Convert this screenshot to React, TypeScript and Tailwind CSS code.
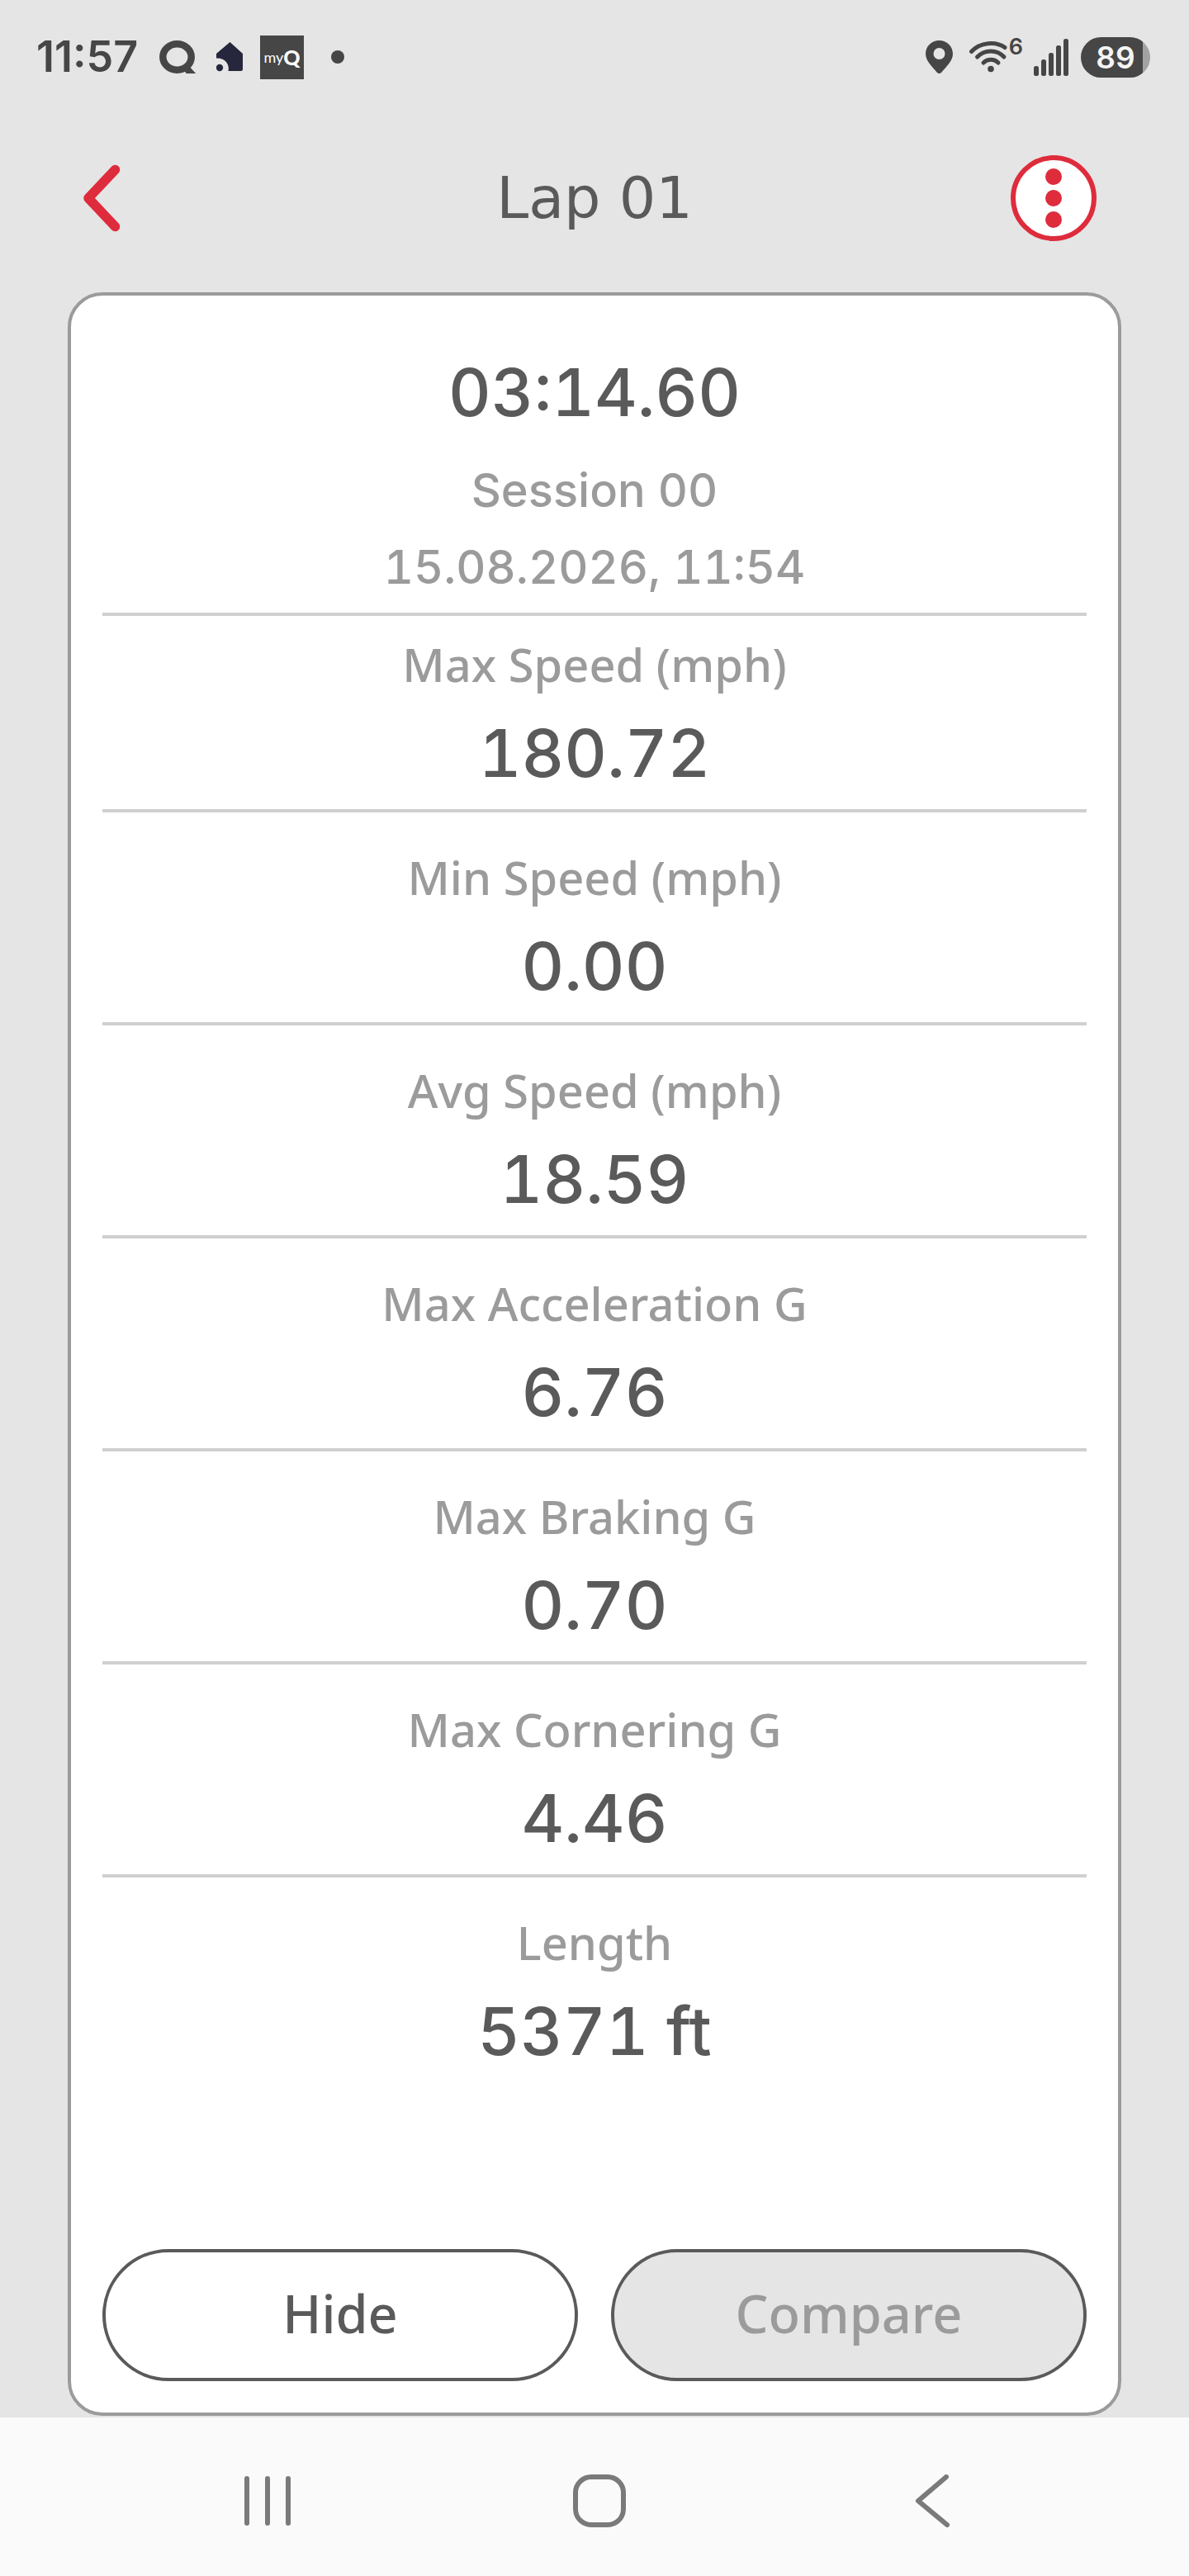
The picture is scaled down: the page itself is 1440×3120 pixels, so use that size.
import type { ReactNode } from 'react';

type Stat = {
  label: string;
  value: string;
};

const stats: Stat[] = [
  { label: 'Max Speed (mph)', value: '180.72' },
  { label: 'Min Speed (mph)', value: '0.00' },
  { label: 'Avg Speed (mph)', value: '18.59' },
  { label: 'Max Acceleration G', value: '6.76' },
  { label: 'Max Braking G', value: '0.70' },
  { label: 'Max Cornering G', value: '4.46' },
  { label: 'Length', value: '5371 ft' },
];

function StatusBar() {
  return (
    <div className="flex h-[138px] items-center justify-between pl-[44px] pr-[47px] text-[#464646]">
      <div className="flex items-center">
        <span className="w-[149px] font-['Inter',sans-serif] text-[52px] font-semibold leading-[60px]">11:57</span>

        {/* Q notification */}
        <svg className="h-[40px] w-[44px]" viewBox="0 0 44 40" fill="none">
          <ellipse cx="21.5" cy="20" rx="17.2" ry="15.7" stroke="currentColor" strokeWidth="8.5" />
          <path d="M29 33.500h7l8 6.500H32.500z" fill="currentColor" />
          <path d="M36 31l8 9H33z" fill="currentColor" />
        </svg>

        {/* Smart home notification */}
        <svg className="ml-[25px] h-[36px] w-[32px]" viewBox="0 0 32 36" fill="#26263c">
          <path d="M16.500 0L32 14v18.500a2.500 2.500 0 0 1-2.500 2.500H14.500c2-8-4-16-14.500-15.500V14z" />
          <circle cx="4" cy="31" r="4.200" />
        </svg>

        <div className="ml-[21px] flex h-[53px] w-[53px] items-center justify-center bg-[#464646] font-['Lato',sans-serif] text-white">
          <span className="text-[18px] leading-none">my</span>
          <span className="text-[25px] font-black leading-none">Q</span>
        </div>

        <span className="ml-[33px] h-4 w-4 rounded-full bg-[#464646]" />
      </div>

      <div className="flex items-center">
        {/* Location */}
        <svg className="h-[40px] w-[33px]" viewBox="0 0 33 40">
          <path
            fill="currentColor"
            fillRule="evenodd"
            d="M16.500 0C7.300 0 0 7.200 0 16.200c0 8.500 8.500 16 13.800 22.600 1.500 1.600 3.900 1.600 5.400 0C24.500 32.200 33 24.700 33 16.200 33 7.200 25.700 0 16.500 0zm0 9a7 7 0 1 1 0 14 7 7 0 0 1 0-14z"
          />
        </svg>

        {/* Wi-Fi */}
        <svg className="ml-[20px] h-[40px] w-[46px]" viewBox="0 0 46 40" fill="none" stroke="currentColor" strokeLinecap="round">
          <path d="M2.500 13.500C13 2 32 .5 43 8.500" strokeWidth="5" />
          <path d="M9.500 20c9-9.500 24-9.500 32.500 0" strokeWidth="5" />
          <path d="M17 27c5-5 13-5 18 0" strokeWidth="5" />
          <circle cx="26" cy="34.500" r="3.800" fill="currentColor" stroke="none" />
        </svg>
        <span className="ml-[2px] self-start font-['Inter',sans-serif] text-[27px] font-semibold leading-[24px]">6</span>

        {/* Signal */}
        <svg className="ml-[13px] h-[45px] w-[43px]" viewBox="0 0 43 45" fill="currentColor">
          <rect x="0" y="33" width="6" height="12" rx="2.500" />
          <rect x="9" y="25" width="6" height="20" rx="2.500" />
          <rect x="18" y="17" width="6" height="28" rx="2.500" />
          <rect x="27" y="8" width="6" height="37" rx="2.500" />
          <rect x="36" y="0" width="6" height="45" rx="2.500" />
        </svg>

        {/* Battery */}
        <div className="ml-[14px] flex h-[49px] w-[84px] items-center justify-center rounded-full bg-linear-to-r from-[#464646] from-89% to-[#a2a2a2] to-89% font-['Inter',sans-serif] text-[37px] font-semibold leading-none text-[#f4f4f4]">
          89
        </div>
      </div>
    </div>
  );
}

function Header() {
  return (
    <header className="grid h-[204px] grid-cols-[1fr_auto_1fr] items-center px-24">
      <button type="button" aria-label="Back" className="flex h-[104px] w-[104px] items-center text-[#de2c3c]">
        <svg className="h-[90px] w-[56px]" viewBox="0 0 56 90" fill="none">
          <path d="M43.500 10.500L11 45l32.500 34.500" stroke="currentColor" strokeWidth="11.500" strokeLinecap="round" strokeLinejoin="round" />
        </svg>
      </button>
      <h1 className="font-['DejaVu_Sans',sans-serif] text-[70px] leading-[80px] text-[#5a5a5a]">Lap 01</h1>
      <button
        type="button"
        aria-label="More options"
        className="mr-4 flex h-[104px] w-[104px] flex-col items-center justify-center gap-[6px] justify-self-end rounded-full border-[6px] border-[#de2c3c] bg-white"
      >
        <span className="h-5 w-5 rounded-full bg-[#de2c3c]" />
        <span className="h-5 w-5 rounded-full bg-[#de2c3c]" />
        <span className="h-5 w-5 rounded-full bg-[#de2c3c]" />
      </button>
    </header>
  );
}

function StatRow({ label, value }: Stat) {
  return (
    <div className="flex flex-col gap-[18px] border-b-4 border-[#d0d0d0] pt-[38px] pb-[18px] first:pt-[18px] last:border-b-0">
      <dt className="text-[56px] font-medium leading-[80px] text-[#9b9b9b]">{label}</dt>
      <dd className="font-['Inter',sans-serif] text-[80px] font-medium leading-[100px] tabular-nums">{value}</dd>
    </div>
  );
}

function NavButton({ label, children }: { label: string; children: ReactNode }) {
  return (
    <button type="button" aria-label={label} className="flex items-center justify-center">
      <svg className="h-[64px] w-[64px]" viewBox="0 0 64 64" fill="none" stroke="#7a7a7a" strokeWidth="6" strokeLinecap="round" strokeLinejoin="round">
        {children}
      </svg>
    </button>
  );
}

export default function App() {
  return (
    <div className="flex min-h-screen flex-col bg-[#e5e5e5] font-['Noto_Sans',sans-serif] text-[#5a5a5a]">
      <StatusBar />
      <Header />

      <main className="mx-[82px] mt-3 mb-[2px] flex flex-1 flex-col rounded-[42px] border-4 border-[#9b9b9b] bg-white px-[38px] pb-[38px] text-center">
        <section className="border-b-4 border-[#d0d0d0] pt-[67px] pb-2 font-['Inter',sans-serif] font-medium tabular-nums">
          <p className="mb-[23px] text-[80px] leading-[100px]">03:14.60</p>
          <p className="text-[56px] leading-[93px] text-[#9b9b9b]">Session 00</p>
          <p className="text-[56px] leading-[93px] text-[#9b9b9b]">15.08.2026, 11:54</p>
        </section>

        <dl>
          {stats.map((stat) => (
            <StatRow key={stat.label} {...stat} />
          ))}
        </dl>

        <div className="mt-auto flex gap-10">
          <button type="button" className="h-[160px] flex-1 rounded-full border-4 border-[#5a5a5a] bg-white pb-1 text-[63px] font-medium">
            Hide
          </button>
          <button type="button" disabled className="h-[160px] flex-1 rounded-full border-4 border-[#5a5a5a] bg-[#e5e5e5] pb-1 text-[63px] font-medium text-[#9b9b9b]">
            Compare
          </button>
        </div>
      </main>

      {/* System navigation */}
      <nav className="grid h-[192px] grid-cols-3 bg-[#fafafa] pt-[10px] pl-[123px] pr-[110px]">
        <NavButton label="Recent apps">
          <path d="M7 5v54M32 5v54M57 5v54" />
        </NavButton>
        <NavButton label="Home">
          <rect x="3" y="3" width="58" height="58" rx="19" />
        </NavButton>
        <NavButton label="Back">
          <path d="M49 3L15 32l35 29" />
        </NavButton>
      </nav>
    </div>
  );
}
